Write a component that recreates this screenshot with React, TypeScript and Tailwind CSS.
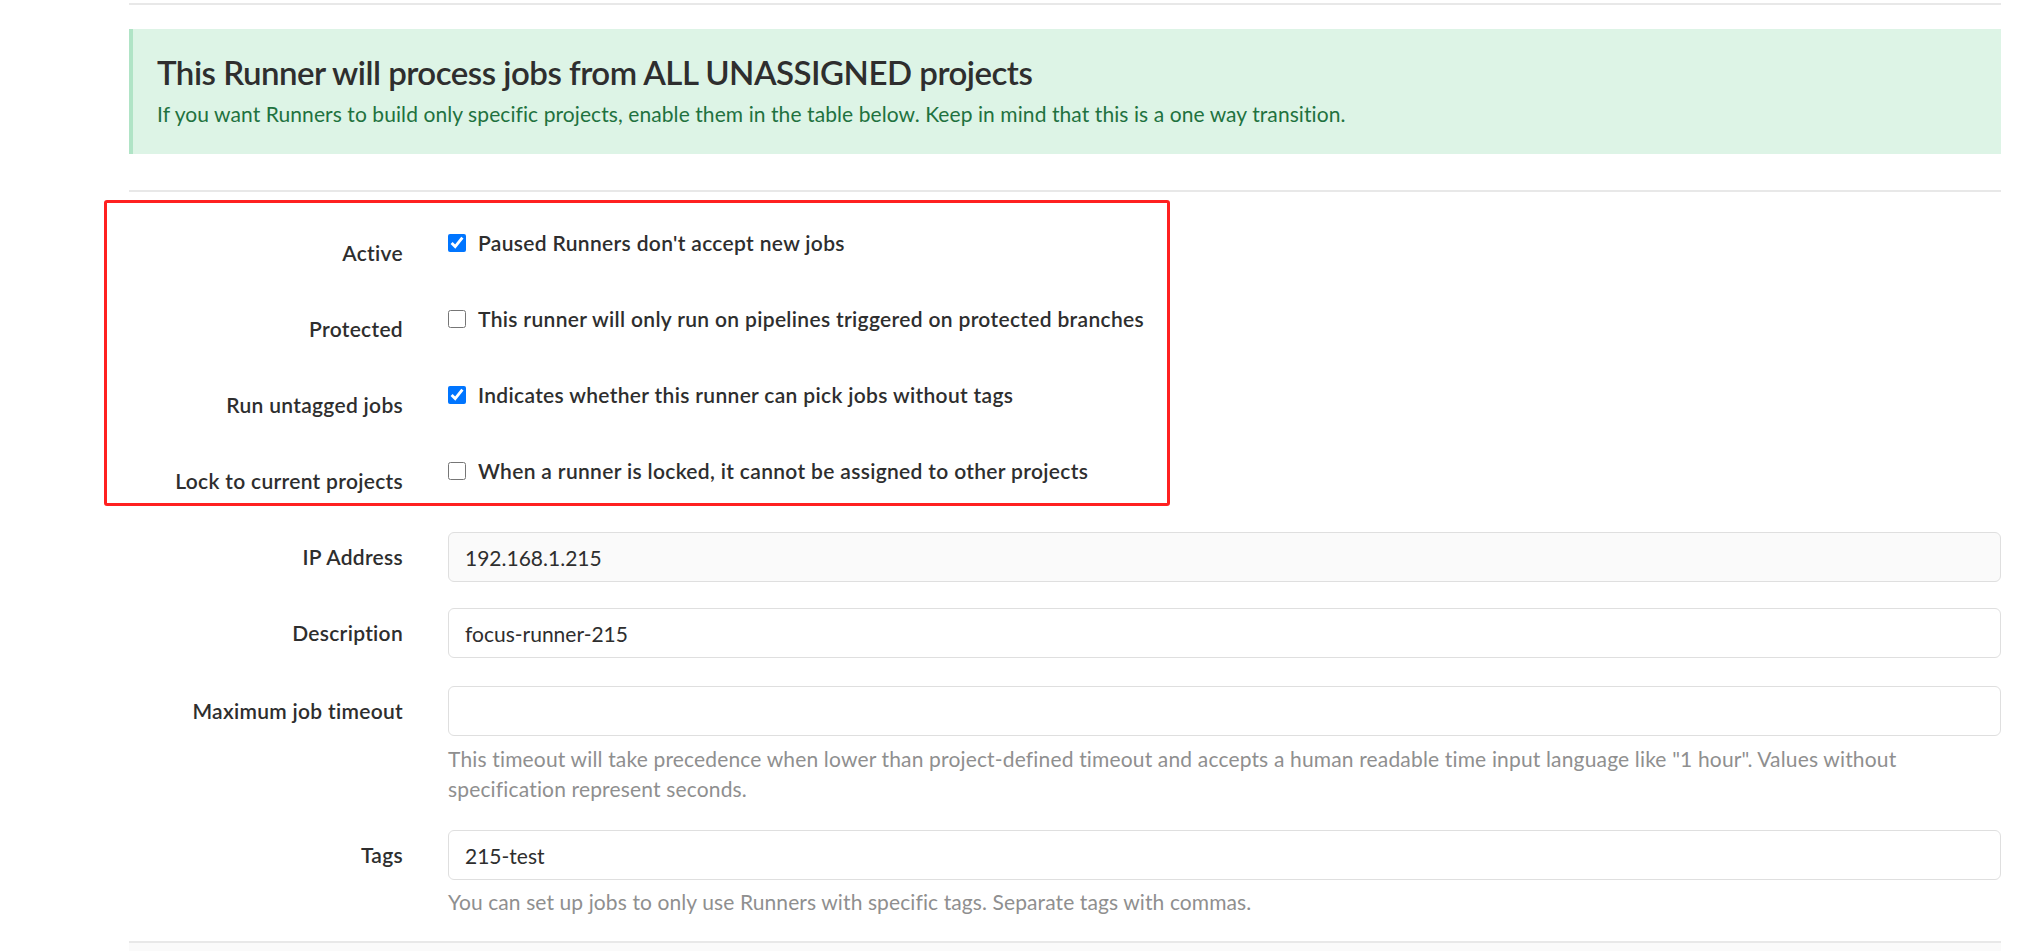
import React from "react";

function CheckRow({ label, text, checked }: { label: string; text: string; checked: boolean }) {
  return (
    <div className="grid grid-cols-[274px_1553px] gap-x-[45px] h-[50px] mb-[26px]">
      <div className="pt-[10px] text-right font-semibold leading-[30px] tracking-[0.3px] text-[#2e2e2e]">{label}</div>
      <label className="flex items-center h-[30px] gap-[12px] font-semibold tracking-[0.33px] text-[#2e2e2e] leading-[30px]">
        <input
          type="checkbox"
          defaultChecked={checked}
          className="m-0 w-[18px] h-[18px] shrink-0 accent-[#0075ff]"
        />
        <span>{text}</span>
      </label>
    </div>
  );
}

function InputRow({
  label,
  value,
  readOnly,
  mt,
  help,
}: {
  label: string;
  value: string;
  readOnly?: boolean;
  mt: string;
  help?: React.ReactNode;
}) {
  return (
    <div className={`grid grid-cols-[274px_1553px] gap-x-[45px] ${mt}`}>
      <div className="pt-[10px] text-right font-semibold leading-[30px] tracking-[0.3px] text-[#2e2e2e]">{label}</div>
      <div>
        <input
          type="text"
          readOnly
          value={value}
          className={`block w-full h-[50px] rounded-[6px] border border-[#dfdfdf] px-[16px] text-[21px] leading-[30px] text-[#2e2e2e] outline-none ${
            readOnly ? "bg-[#fafafa]" : "bg-white"
          }`}
          style={{ fontFamily: "Lato, sans-serif" }}
        />
        {help}
      </div>
    </div>
  );
}

export default function App() {
  return (
    <div className="relative w-[2031px] h-[951px] overflow-hidden bg-white text-[21px] leading-[30px] font-['Lato',sans-serif] text-[#2e2e2e]">
      <div className="ml-[129px] w-[1872px] pt-[3px]">
        <div className="h-[2px] bg-[#e8e8e8]" />
        <div className="mt-[24px] h-[125px] border-l-[4px] border-[#b0e4c6] bg-[#ddf4e6] pl-[24px] pt-[23px]">
          <div className="text-[33px] leading-[40px] font-semibold tracking-[-0.5px] text-[#2e2e2e]">
            This Runner will process jobs from ALL UNASSIGNED projects
          </div>
          <div className="mt-[7px] text-[21px] leading-[30px] tracking-[0.08px] text-[#1f723f]">
            If you want Runners to build only specific projects, enable them in the table below. Keep in mind that this is a one way transition.
          </div>
        </div>
        <div className="mt-[36px] h-[2px] bg-[#e8e8e8]" />
        <div className="mt-[36px]">
          <CheckRow label="Active" text="Paused Runners don't accept new jobs" checked />
          <CheckRow
            label="Protected"
            text="This runner will only run on pipelines triggered on protected branches"
            checked={false}
          />
          <CheckRow label="Run untagged jobs" text="Indicates whether this runner can pick jobs without tags" checked />
          <CheckRow
            label="Lock to current projects"
            text="When a runner is locked, it cannot be assigned to other projects"
            checked={false}
          />
        </div>
        <InputRow label="IP Address" value="192.168.1.215" readOnly mt="mt-[1px]" />
        <InputRow label="Description" value="focus-runner-215" mt="mt-[26px]" />
        <InputRow
          label="Maximum job timeout"
          value=""
          mt="mt-[28px]"
          help={
            <p className="mt-[8px] text-[21px] leading-[30px] tracking-[0.16px] text-[#8f8f8f]">
              This timeout will take precedence when lower than project-defined timeout and accepts a human readable time input language like "1 hour". Values without<br />specification represent seconds.
            </p>
          }
        />
        <InputRow
          label="Tags"
          value="215-test"
          mt="mt-[26px]"
          help={
            <p className="mt-[7px] text-[21px] leading-[30px] tracking-[0.1px] text-[#8f8f8f]">
              You can set up jobs to only use Runners with specific tags. Separate tags with commas.
            </p>
          }
        />
        <div className="mt-[24px] h-[40px] border-t-2 border-[#e8e8e8] bg-[#fafafa]" />
      </div>
      <div className="pointer-events-none absolute left-[104px] top-[200px] w-[1066px] h-[306px] rounded-[3px] border-[3px] border-[#ff2020]" />
    </div>
  );
}
